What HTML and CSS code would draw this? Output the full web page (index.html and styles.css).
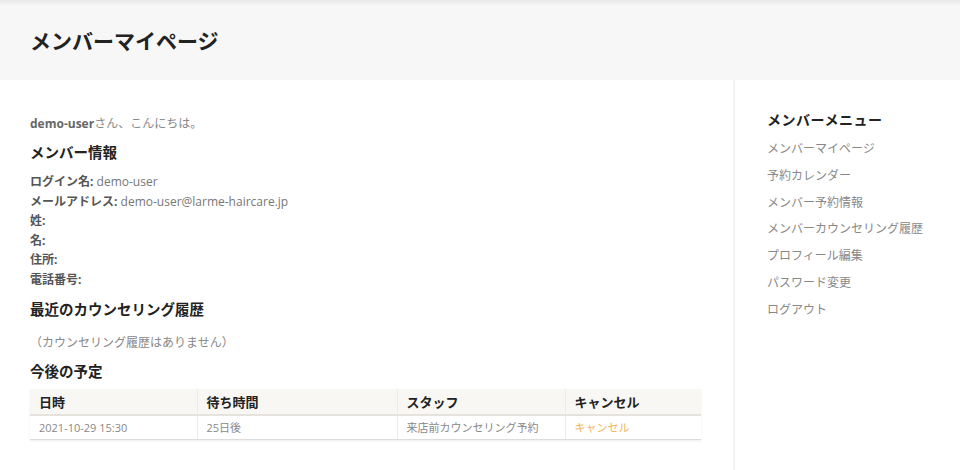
FILE: index.html
```html
<!DOCTYPE html>
<html lang="ja">
<head>
<meta charset="utf-8">
<title>メンバーマイページ</title>
<link rel="stylesheet" href="styles.css">
</head>
<body>
<header class="page-header">
  <h1 class="page-title">メンバーマイページ</h1>
</header>
<div class="layout">
  <main class="main">
    <p class="greeting"><strong>demo-user</strong>さん、こんにちは。</p>
    <h2 class="section-title">メンバー情報</h2>
    <ul class="info">
      <li><b>ログイン名:</b> demo-user</li>
      <li><b>メールアドレス:</b> demo-user@larme-haircare.jp</li>
      <li><b>姓:</b></li>
      <li><b>名:</b></li>
      <li><b>住所:</b></li>
      <li><b>電話番号:</b></li>
    </ul>
    <h2 class="section-title">最近のカウンセリング履歴</h2>
    <p class="empty">（カウンセリング履歴はありません）</p>
    <h2 class="section-title section-title-table">今後の予定</h2>
    <table class="schedule">
      <thead>
        <tr><th class="c1">日時</th><th class="c2">待ち時間</th><th class="c3">スタッフ</th><th class="c4">キャンセル</th></tr>
      </thead>
      <tbody>
        <tr><td>2021-10-29 15:30</td><td>25日後</td><td>来店前カウンセリング予約</td><td><a class="cancel" href="#">キャンセル</a></td></tr>
      </tbody>
    </table>
  </main>
  <aside class="sidebar">
    <h3 class="side-title">メンバーメニュー</h3>
    <ul class="side-menu">
      <li><a href="#">メンバーマイページ</a></li>
      <li><a href="#">予約カレンダー</a></li>
      <li><a href="#">メンバー予約情報</a></li>
      <li><a href="#">メンバーカウンセリング履歴</a></li>
      <li><a href="#">プロフィール編集</a></li>
      <li><a href="#">パスワード変更</a></li>
      <li><a href="#">ログアウト</a></li>
    </ul>
  </aside>
</div>
</body>
</html>
```

FILE: styles.css
```css
* { box-sizing: border-box; }
html, body { margin: 0; padding: 0; background: #fff; }
body {
  font-family: "Open Sans", "Noto Sans CJK JP", sans-serif;
  font-size: 12px;
  color: #777;
}
.page-header {
  height: 80px;
  background: #f7f7f7;
  box-shadow: inset 0 5px 5px -3px rgba(0,0,0,0.08);
  padding: 0 30px;
  display: flex;
  align-items: center;
}
.page-title {
  margin: 0;
  font-size: 21px;
  font-weight: 700;
  color: #222;
  padding-bottom: 1px;
}
.layout {
  display: grid;
  grid-template-columns: 733px 1fr;
  min-height: 390px;
}
.main {
  padding: 34px 32px 0 30px;
}
.greeting { margin: 0 0 8px; line-height: 20px; color: #888; }
.greeting strong { color: #666; font-weight: 700; }
.section-title {
  margin: 0 0 8px;
  font-size: 14.5px;
  font-weight: 700;
  color: #222;
  line-height: 22px;
}
.section-title-table { margin-bottom: 6px; }
.info {
  list-style: none;
  margin: 0 0 9px;
  padding: 0;
  line-height: 19.6px;
}
.info b { color: #555; font-weight: 700; }
.empty { margin: 0 0 6px; padding-top: 2px; line-height: 24px; color: #888; }
.schedule {
  width: 671px;
  border-collapse: collapse;
  box-shadow: 0 1px 2px rgba(0,0,0,0.08);
}
.schedule th {
  background: #f8f7f3;
  color: #222;
  font-size: 13px;
  font-weight: 700;
  text-align: left;
  height: 26px;
  padding: 0 9px;
  border-bottom: 2px solid #e6e3dc;
  border-left: 1px solid #ebebeb;
}
.schedule td {
  height: 25px;
  padding: 0 9px;
  color: #888;
  font-size: 11px;
  border-left: 1px solid #ebebeb;
  border-bottom: 1px solid #dcdcdc;
}
.schedule th:first-child, .schedule td:first-child { border-left: none; }
.c1 { width: 167px; }
.c2 { width: 200px; }
.c3 { width: 168px; }
.cancel { color: #f2b65a; text-decoration: none; }
.sidebar {
  border-left: 2px solid #f3f3f3;
  padding: 30px 20px 0 32px;
}
.side-title {
  margin: 0 0 6px;
  font-size: 14px;
  font-weight: 700;
  color: #222;
  line-height: 20px;
  letter-spacing: 0.5px;
}
.side-menu { list-style: none; margin: 0; padding: 0; }
.side-menu li { line-height: 26.8px; }
.side-menu a { color: #888; text-decoration: none; }
```
